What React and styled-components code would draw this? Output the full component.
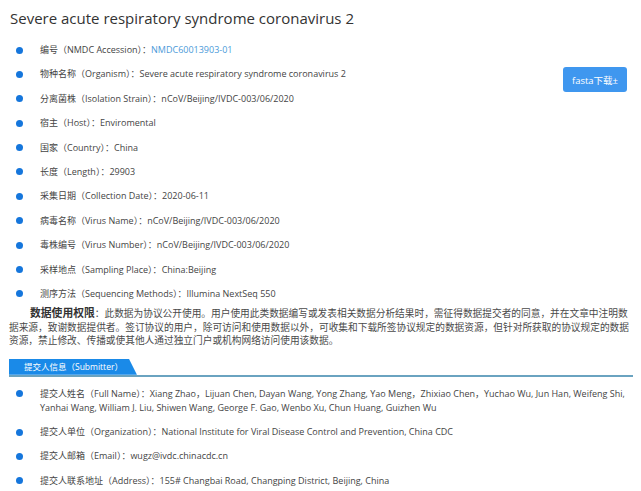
import React from 'react';
import styled, { createGlobalStyle } from 'styled-components';

const Global = createGlobalStyle`
  body {
    margin: 0;
    background: #fff;
    font-family: "Open Sans", "Noto Sans CJK SC", sans-serif;
    color: #444;
  }
`;

const Page = styled.div`
  width: 641px;
  padding: 6px 8px 0 9px;
  box-sizing: border-box;
`;

const Title = styled.h1`
  margin: 0;
  font-size: 15px;
  font-weight: 400;
  color: #333;
  line-height: 24px;
  padding-left: 1px;
`;

const Details = styled.div`
  display: flex;
  justify-content: space-between;
  align-items: flex-start;
  margin-top: 13px;
`;

const List = styled.ul`
  list-style: none;
  margin: 0;
  padding: 0;
`;

const Item = styled.li`
  position: relative;
  padding-left: 31px;
  font-size: 9px;
  line-height: 14px;
  margin-bottom: ${p => (p.$last ? '0' : '10.4px')};
  &::before {
    content: '';
    position: absolute;
    left: 7px;
    top: 3.5px;
    width: 7px;
    height: 7px;
    border-radius: 50%;
    background: #1576dc;
  }
`;

const Link = styled.a`
  color: #4b9ad9;
  text-decoration: none;
`;

const Download = styled.button`
  margin-top: 24px;
  margin-right: 6px;
  width: 64px;
  height: 25px;
  border: none;
  border-radius: 3px;
  background: #3f97ef;
  color: #fff;
  font-family: "Open Sans", "Noto Sans CJK SC", sans-serif;
  font-size: 9.5px;
  padding: 0;
`;

const Notice = styled.p`
  margin: 5px 0 0 0;
  font-family: "Noto Sans CJK SC", sans-serif;
  font-size: 9.7px;
  line-height: 13.6px;
  text-indent: 21px;
  color: #4a4a4a;
`;

const Strong = styled.b`
  color: #333;
  font-size: 10.8px;
`;

const TabBar = styled.div`
  display: flex;
  align-items: flex-end;
  margin-top: 11px;
  border-bottom: 2px solid #6aa3c0;
`;

const Tab = styled.div`
  height: 16px;
  line-height: 16px;
  padding: 0 14px 0 15px;
  background: #1a8ae8;
  color: #fff;
  font-size: 8.5px;
  clip-path: polygon(0 0, calc(100% - 8px) 0, 100% 100%, 0 100%);
`;

const SubmitterList = styled(List)`
  margin-top: 10px;
`;

const fields = [
  ['编号（NMDC Accession）：', 'NMDC60013903-01', true],
  ['物种名称（Organism）：', 'Severe acute respiratory syndrome coronavirus 2'],
  ['分离菌株（Isolation Strain）：', 'nCoV/Beijing/IVDC-003/06/2020'],
  ['宿主（Host）：', 'Enviromental'],
  ['国家（Country）：', 'China'],
  ['长度（Length）：', '29903'],
  ['采集日期（Collection Date）：', '2020-06-11'],
  ['病毒名称（Virus Name）：', 'nCoV/Beijing/IVDC-003/06/2020'],
  ['毒株编号（Virus Number）：', 'nCoV/Beijing/IVDC-003/06/2020'],
  ['采样地点（Sampling Place）：', 'China:Beijing'],
  ['测序方法（Sequencing Methods）：', 'Illumina NextSeq 550'],
];

const submitter = [
  ['提交人姓名（Full Name）：', 'Xiang Zhao，Lijuan Chen, Dayan Wang, Yong Zhang, Yao Meng，Zhixiao Chen，Yuchao Wu, Jun Han, Weifeng Shi, Yanhai Wang, William J. Liu, Shiwen Wang, George F. Gao, Wenbo Xu, Chun Huang, Guizhen Wu'],
  ['提交人单位（Organization）：', 'National Institute for Viral Disease Control and Prevention, China CDC'],
  ['提交人邮箱（Email）：', 'wugz@ivdc.chinacdc.cn'],
  ['提交人联系地址（Address）：', '155# Changbai Road, Changping District, Beijing, China'],
];

const App = () => {
  return (
    <Page>
      <Global />
      <Title>Severe acute respiratory syndrome coronavirus 2</Title>
      <Details>
        <List>
          {fields.map(([label, value, link], i) => (
            <Item key={label} $last={i === fields.length - 1}>
              {label}
              {link ? <Link href="#">{value}</Link> : value}
            </Item>
          ))}
        </List>
        <Download>fasta下载±</Download>
      </Details>
      <Notice>
        <Strong>数据使用权限</Strong>：此数据为协议公开使用。用户使用此类数据编写或发表相关数据分析结果时，需征得数据提交者的同意，并在文章中注明数据来源，致谢数据提供者。签订协议的用户，除可访问和使用数据以外，可收集和下载所签协议规定的数据资源，但针对所获取的协议规定的数据资源，禁止修改、传播或使其他人通过独立门户或机构网络访问使用该数据。
      </Notice>
      <TabBar>
        <Tab>提交人信息（Submitter）</Tab>
      </TabBar>
      <SubmitterList>
        {submitter.map(([label, value], i) => (
          <Item key={label} $last={i === submitter.length - 1}>
            {label}{value}
          </Item>
        ))}
      </SubmitterList>
    </Page>
  );
};

export default App;
